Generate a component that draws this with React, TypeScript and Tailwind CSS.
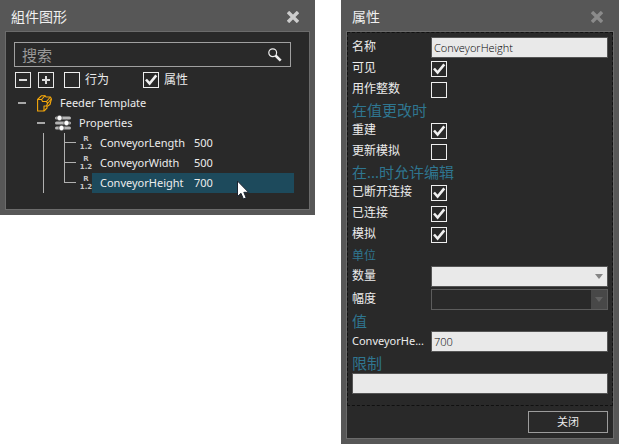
import { useState } from "react";
import type { ReactNode } from "react";

function CloseIcon() {
  return (
    <svg width="12" height="12" viewBox="0 0 12 12" stroke="currentColor" strokeWidth="3.4">
      <path d="M1 1L11 11M11 1L1 11" />
    </svg>
  );
}

function Panel({ title, closeClass, children }: { title: string; closeClass: string; children: ReactNode }) {
  return (
    <section className="min-w-0 bg-[#575757] px-[5px] pb-[5px]">
      <header className="flex h-[31px] items-center justify-between pt-[2px] pr-[11px] pl-[6px]">
        <h2 className="text-sm leading-5 text-[#f0f0f0]">{title}</h2>
        <button type="button" aria-label="Close" className={closeClass}>
          <CloseIcon />
        </button>
      </header>
      {children}
    </section>
  );
}

function Check({ id, initial = false }: { id: string; initial?: boolean }) {
  const [on, setOn] = useState(initial);
  return (
    <span className="grid size-4 shrink-0">
      <input
        id={id}
        type="checkbox"
        checked={on}
        onChange={() => setOn(!on)}
        className="col-start-1 row-start-1 size-4 appearance-none border border-[#efefef] bg-[#292929]"
      />
      {on && (
        <svg
          className="pointer-events-none col-start-1 row-start-1"
          width="16"
          height="16"
          viewBox="0 0 16 16"
          fill="none"
          stroke="#f0f0f0"
          strokeWidth="2.6"
        >
          <path d="M3 7.5L6.6 11.6L13.3 3.4" />
        </svg>
      )}
    </span>
  );
}

function SquareButton({ plus = false }: { plus?: boolean }) {
  return (
    <button
      type="button"
      aria-label={plus ? "Expand all" : "Collapse all"}
      className="flex size-4 items-center justify-center border border-[#e8e8e8]"
    >
      <svg width="10" height="10" viewBox="0 0 10 10" stroke="#dddddd" strokeWidth="2">
        <path d={plus ? "M1 5H9M5 1V9" : "M1 5H9"} />
      </svg>
    </button>
  );
}

function Collapse({ label }: { label: string }) {
  return (
    <button type="button" aria-label={label} className="flex h-5 w-2 items-center">
      <span className="h-[2px] w-2 bg-[#a8a8a8]" />
    </button>
  );
}

function ComponentIcon() {
  return (
    <svg width="15" height="17" viewBox="0 0 15 17" fill="none" stroke="#f5a80c" strokeWidth="1.1" strokeLinejoin="round">
      <path d="M0.6 4.5L4.5 0.7H8L9 2H13.4L14.4 4L13 9.5L10 11.5V13L7 16H0.6Z" />
      <path d="M0.6 4.5H4.6L5.5 6.5H9.5L10.5 8.5L9.5 11H7V16M4.6 4.5L8 0.7M9.5 6.5L13.4 2M10.5 8.5L14.4 4" />
    </svg>
  );
}

function SlidersIcon() {
  return (
    <svg width="16" height="16" viewBox="0 0 16 16">
      <g fill="#b5b5b5">
        <rect y="1.5" width="16" height="3" rx="1.5" />
        <rect y="6.5" width="16" height="3" rx="1.5" />
        <rect y="11.5" width="16" height="3" rx="1.5" />
      </g>
      <g fill="#ffffff" stroke="#292929" strokeWidth="0.6">
        <circle cx="4.5" cy="3" r="2.7" />
        <circle cx="11.5" cy="8" r="2.7" />
        <circle cx="6.5" cy="13" r="2.7" />
      </g>
    </svg>
  );
}

function RealIcon() {
  return (
    <span className="flex h-5 w-3 shrink-0 flex-col items-center justify-center font-['DejaVu_Sans'] text-[7px] leading-[8px] font-bold text-[#c6c6c6]">
      <span>R</span>
      <span>1.2</span>
    </span>
  );
}

function TreeLeaf({ name, value, last = false }: { name: string; value: string; last?: boolean }) {
  return (
    <li className="flex h-5">
      <svg className="shrink-0" width="16" height="20" viewBox="0 0 16 20" stroke="#b0b0b0">
        <path d={last ? "M0.5 0V9.5M0 9.5H12" : "M0.5 0V20M0 9.5H12"} />
      </svg>
      <RealIcon />
      <span className={`flex flex-1 items-center pl-2 ${last ? "bg-[#1d4a5c]" : ""}`}>
        <span className="w-[94px]">{name}</span>
        <span>{value}</span>
      </span>
    </li>
  );
}

function Cursor() {
  return (
    <svg className="absolute top-[180px] left-[236px]" width="14" height="21" viewBox="0 0 14 21">
      <path d="M1.5 1V16.5L5 13.3L7.4 19L10.2 17.8L7.8 12.3H12.5Z" fill="#ffffff" stroke="#1b2430" strokeWidth="1" />
    </svg>
  );
}

function Heading({ children, className = "h-[21px] text-[15px]" }: { children: ReactNode; className?: string }) {
  return <h3 className={`flex items-center text-[#2f7690] ${className}`}>{children}</h3>;
}

function Row({
  id,
  label,
  labelClass = "text-xs",
  children,
}: {
  id: string;
  label: string;
  labelClass?: string;
  children: ReactNode;
}) {
  return (
    <div className="flex h-[21px] items-center">
      <label htmlFor={id} className={`w-[79px] shrink-0 pb-px leading-5 ${labelClass}`}>
        {label}
      </label>
      {children}
    </div>
  );
}

const field =
  "h-[21px] w-full min-w-0 flex-1 border border-[#555555] bg-[#e9e9e9] px-[2px] font-['Open_Sans'] text-[11px] font-light text-black outline-none";

function Arrow({ className }: { className: string }) {
  return (
    <svg className={className} width="8" height="5" viewBox="0 0 8 5" fill="currentColor">
      <path d="M0 0H8L4 5Z" />
    </svg>
  );
}

export default function App() {
  return (
    <main className="grid grid-cols-[315fr_278fr] items-start gap-[26px] bg-white font-['Noto_Sans','Noto_Sans_CJK_SC',sans-serif] text-xs leading-5 text-[#ececec]">
      <div className="relative">
        <Panel title="組件图形" closeClass="text-[#cccccc]">
          <div className="border border-[#6b6b6b] bg-[#292929] pt-[10px] pb-4">
            <div className="mr-[18px] ml-2 flex h-[25px] items-center border border-[#a0a0a0] pr-2 pl-[7px]">
              <input
                type="text"
                aria-label="搜索"
                placeholder="搜索"
                className="min-w-0 flex-1 text-[15px] leading-5 outline-none placeholder:text-[#999999]"
              />
              <button type="button" aria-label="Search">
                <svg width="14" height="14" viewBox="0 0 14 14" fill="none" stroke="#eeeeee">
                  <circle cx="4.7" cy="4.7" r="3.9" strokeWidth="1.2" />
                  <path d="M7.5 7.5L12.7 12.7" strokeWidth="2.6" />
                </svg>
              </button>
            </div>
            <div className="mt-[3px] ml-[9px] flex h-5 items-center">
              <SquareButton />
              <span className="w-[7px]" />
              <SquareButton plus />
              <span className="w-[10px]" />
              <Check id="behavior" />
              <label htmlFor="behavior" className="w-[63px] pl-[5px]">
                行为
              </label>
              <Check id="property" initial />
              <label htmlFor="property" className="pl-[5px]">
                属性
              </label>
            </div>
            <div className="mt-[3px] mr-[15px] ml-3 text-[11px]">
              <div className="flex h-5 items-center">
                <Collapse label="Feeder Template" />
                <span className="mr-2 ml-[11px]">
                  <ComponentIcon />
                </span>
                Feeder Template
              </div>
              <div className="ml-[19px]">
                <div className="flex h-5 items-center">
                  <Collapse label="Properties" />
                  <span className="mr-2 ml-[10px]">
                    <SlidersIcon />
                  </span>
                  Properties
                </div>
                <ul className="ml-[6px] border-l border-[#b0b0b0] pl-5">
                  <TreeLeaf name="ConveyorLength" value="500" />
                  <TreeLeaf name="ConveyorWidth" value="500" />
                  <TreeLeaf name="ConveyorHeight" value="700" last />
                </ul>
              </div>
            </div>
          </div>
        </Panel>
        <Cursor />
      </div>

      <Panel title="属性" closeClass="text-[#8b8b8b]">
        <form className="border border-[#6b6b6b] bg-[#292929]" onSubmit={(e) => e.preventDefault()}>
          <div className="border border-dashed border-[#101010] px-1 pt-1 pb-[11px]">
            <Row id="name" label="名称">
              <input id="name" type="text" defaultValue="ConveyorHeight" className={field} />
            </Row>
            <Row id="visible" label="可见">
              <Check id="visible" initial />
            </Row>
            <Row id="integer" label="用作整数">
              <Check id="integer" />
            </Row>
            <Heading className="h-5 text-[15px]">在值更改时</Heading>
            <Row id="rebuild" label="重建">
              <Check id="rebuild" initial />
            </Row>
            <Row id="update" label="更新模拟">
              <Check id="update" />
            </Row>
            <Heading className="h-5 text-[15px]">在...时允许编辑</Heading>
            <Row id="disconnected" label="已断开连接">
              <Check id="disconnected" initial />
            </Row>
            <Row id="connected" label="已连接">
              <Check id="connected" initial />
            </Row>
            <Row id="simulation" label="模拟">
              <Check id="simulation" initial />
            </Row>
            <Heading className="h-[21px] text-xs">单位</Heading>
            <Row id="quantity" label="数量">
              <span className="relative flex flex-1">
                <select id="quantity" className={`${field} appearance-none`}>
                  <option></option>
                </select>
                <Arrow className="pointer-events-none absolute top-2 right-[5px] text-[#858585]" />
              </span>
            </Row>
            <div className="h-[2px]" />
            <Row id="magnitude" label="幅度">
              <span className="relative flex flex-1">
                <select
                  id="magnitude"
                  disabled
                  className="h-[21px] flex-1 appearance-none border border-[#5c5c5c] bg-[#292929] opacity-100"
                >
                  <option></option>
                </select>
                <span className="pointer-events-none absolute top-px right-px flex h-[19px] w-4 items-center justify-center bg-[#484848] text-[#626262]">
                  <Arrow className="" />
                </span>
              </span>
            </Row>
            <Heading>值</Heading>
            <Row id="value" label="ConveyorHe..." labelClass="text-[11px]">
              <input id="value" type="text" defaultValue="700" className={field} />
            </Row>
            <Heading>限制</Heading>
            <div className="flex">
              <input aria-label="限制" type="text" className={field} />
            </div>
          </div>
          <div className="flex justify-end px-[5px] pt-[5px] pb-[5px]">
            <button type="button" className="h-[22px] w-[80px] border border-[#9c9c9c] text-[11px] leading-5">
              关闭
            </button>
          </div>
        </form>
      </Panel>
    </main>
  );
}
